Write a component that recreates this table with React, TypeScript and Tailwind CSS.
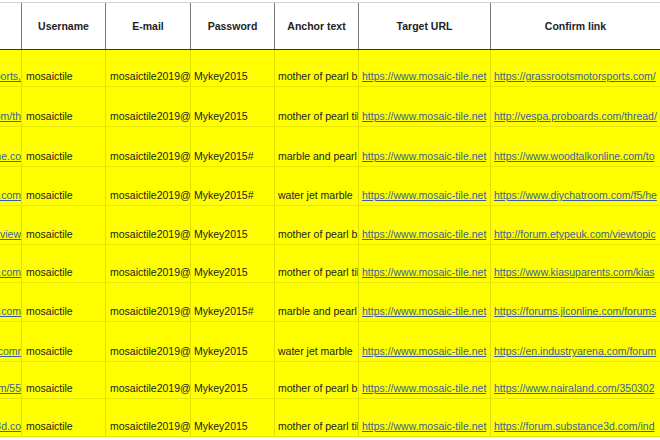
import React from "react";

type Row = {
  h: number;
  c0: string;
  pw: string;
  anchor: string;
  confirm: string;
};

const rows: Row[] = [
  { h: 37, c0: "https://grassrootsmotorsports,", pw: "Mykey2015", anchor: "mother of pearl bathroom", confirm: "https://grassrootsmotorsports.com/" },
  { h: 40, c0: "http://vespa.proboards.com/th", pw: "Mykey2015", anchor: "mother of pearl tiles", confirm: "http://vespa.proboards.com/thread/" },
  { h: 40, c0: "https://www.woodtalkonline.co", pw: "Mykey2015#", anchor: "marble and pearl", confirm: "https://www.woodtalkonline.com/to" },
  { h: 39, c0: "https://www.diychatroom.com", pw: "Mykey2015#", anchor: "water jet marble", confirm: "https://www.diychatroom.com/f5/he" },
  { h: 39, c0: "http://forum.etypeuk.com/view", pw: "Mykey2015", anchor: "mother of pearl bathroom", confirm: "http://forum.etypeuk.com/viewtopic" },
  { h: 38, c0: "https://www.kiasuparents.com", pw: "Mykey2015", anchor: "mother of pearl tiles", confirm: "https://www.kiasuparents.com/kias" },
  { h: 39, c0: "https://forums.jlconline.com", pw: "Mykey2015#", anchor: "marble and pearl", confirm: "https://forums.jlconline.com/forums" },
  { h: 40, c0: "https://en.industryarena.comr", pw: "Mykey2015", anchor: "water jet marble", confirm: "https://en.industryarena.com/forum" },
  { h: 37, c0: "https://www.nairaland.com/55", pw: "Mykey2015", anchor: "mother of pearl bathroom", confirm: "https://www.nairaland.com/350302" },
  { h: 38, c0: "https://forum.substance3d.co", pw: "Mykey2015", anchor: "mother of pearl tiles", confirm: "https://forum.substance3d.com/ind" },
];

const headers = ["", "Username", "E-mail", "Password", "Anchor text", "Target URL", "Confirm link"];
const widths = ["w-[22px]", "w-[84px]", "w-[85px]", "w-[84px]", "w-[84px]", "w-[132px]", "w-[169px]"];

const link = "text-[#3d5f98] underline decoration-[#3d5f98]";

export default function App() {
  return (
    <div
      className="w-[660px] h-[440px] overflow-hidden bg-white text-[10.5px] leading-[12px] text-[#222]"
      style={{ fontFamily: '"Liberation Sans", Arial, sans-serif' }}
    >
      <div className="h-[2px] bg-white" />
      <div className="h-[1px] bg-[#d4d4d4]" />
      <div className="flex h-[47px] border-b border-[#333] bg-white">
        {headers.map((h, i) => (
          <div
            key={i}
            className={`${widths[i]} shrink-0 flex items-center justify-center font-bold ${i < 6 ? "border-r border-[#777]" : ""}`}
          >
            {h}
          </div>
        ))}
      </div>
      <div className="bg-[#ffff00]">
        {rows.map((r, idx) => (
          <div key={idx} className="flex border-b border-[#e8e800]" style={{ height: r.h }}>
            <div className="w-[22px] shrink-0 overflow-hidden flex items-end justify-end pb-[4px] border-r border-[#e0e000]">
              <span className={`whitespace-nowrap ${link}`}>{r.c0}</span>
            </div>
            <div className="w-[84px] shrink-0 overflow-hidden flex items-end pl-[4px] pb-[4px] border-r border-[#e0e000] whitespace-nowrap">
              mosaictile
            </div>
            <div className="w-[85px] shrink-0 overflow-hidden flex items-end pl-[4px] pb-[4px] border-r border-[#e0e000] whitespace-nowrap">
              mosaictile2019@gmail.com
            </div>
            <div className="w-[84px] shrink-0 overflow-hidden flex items-end pl-[3px] pb-[4px] border-r border-[#e0e000] whitespace-nowrap">
              {r.pw}
            </div>
            <div className="w-[84px] shrink-0 overflow-hidden flex items-end pl-[3px] pb-[4px] border-r border-[#e0e000] whitespace-nowrap">
              {r.anchor}
            </div>
            <div className="w-[132px] shrink-0 overflow-hidden flex items-end pl-[3px] pb-[4px] border-r border-[#e0e000] whitespace-nowrap">
              <span className={link}>https://www.mosaic-tile.net</span>
            </div>
            <div className="w-[169px] shrink-0 overflow-hidden flex items-end pl-[3px] pb-[4px] whitespace-nowrap">
              <span className={link}>{r.confirm}</span>
            </div>
          </div>
        ))}
      </div>
    </div>
  );
}
